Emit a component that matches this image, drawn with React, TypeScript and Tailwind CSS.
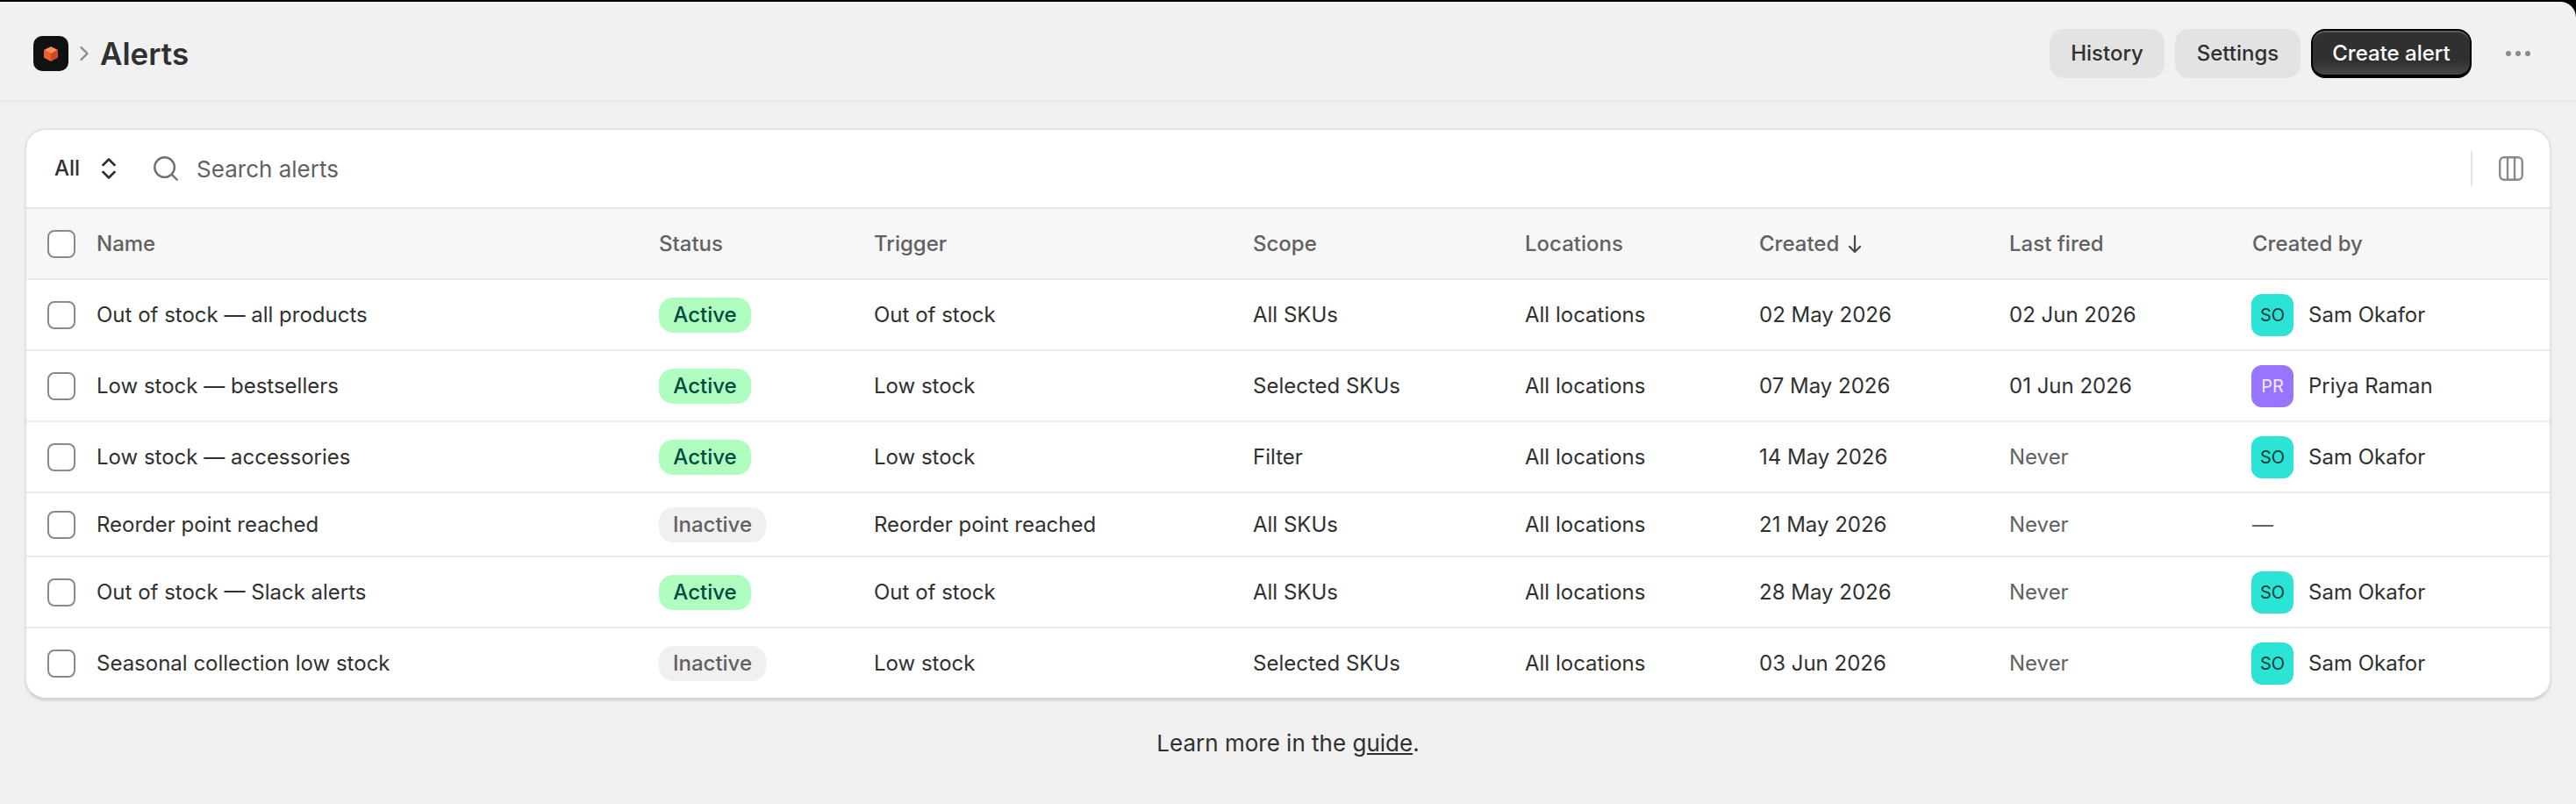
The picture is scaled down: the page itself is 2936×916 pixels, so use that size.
import { ChevronRight, Search } from "lucide-react";

type Row = {
  name: string;
  active: boolean;
  trigger: string;
  scope: string;
  created: string;
  fired: string;
  by: "SO" | "PR" | null;
};

const rows: Row[] = [
  { name: "Out of stock — all products", active: true, trigger: "Out of stock", scope: "All SKUs", created: "02 May 2026", fired: "02 Jun 2026", by: "SO" },
  { name: "Low stock — bestsellers", active: true, trigger: "Low stock", scope: "Selected SKUs", created: "07 May 2026", fired: "01 Jun 2026", by: "PR" },
  { name: "Low stock — accessories", active: true, trigger: "Low stock", scope: "Filter", created: "14 May 2026", fired: "Never", by: "SO" },
  { name: "Reorder point reached", active: false, trigger: "Reorder point reached", scope: "All SKUs", created: "21 May 2026", fired: "Never", by: null },
  { name: "Out of stock — Slack alerts", active: true, trigger: "Out of stock", scope: "All SKUs", created: "28 May 2026", fired: "Never", by: "SO" },
  { name: "Seasonal collection low stock", active: false, trigger: "Low stock", scope: "Selected SKUs", created: "03 Jun 2026", fired: "Never", by: "SO" },
];

function Checkbox() {
  return <div className="ml-[24px] h-[32px] w-[32px] rounded-[8px] border-2 border-[#8a8a8a] bg-white" />;
}

function Logo() {
  return (
    <div className="flex h-[40px] w-[40px] items-center justify-center rounded-[10px] bg-[#0f1113]">
      <svg width="16" height="17" viewBox="0 0 16 17">
        <path d="M8 0l8 4-8 4.5-8-4.5z" fill="#ff8a5c" />
        <path d="M0 4l8 4.5V17l-8-4.2z" fill="#e8602e" />
        <path d="M16 4L8 8.5V17l8-4.2z" fill="#cc4c1e" />
      </svg>
    </div>
  );
}

function UpDown() {
  return (
    <svg width="16" height="24" viewBox="0 0 16 24" fill="none" stroke="#303030" strokeWidth="2.6" strokeLinecap="round" strokeLinejoin="round">
      <path d="M1.5 8L8 1.5 14.5 8M1.5 16L8 22.5 14.5 16" />
    </svg>
  );
}

function ColumnsIcon() {
  return (
    <svg width="28" height="28" viewBox="0 0 28 28" fill="none" stroke="#8a8a8a" strokeWidth="2.4">
      <rect x="1.2" y="1.2" width="25.6" height="25.6" rx="5" />
      <path d="M10 1.2v25.6M18 1.2v25.6" />
    </svg>
  );
}

function SortArrow() {
  return (
    <svg className="ml-[11px]" width="14" height="20" viewBox="0 0 14 20" fill="none" stroke="#4a4a4a" strokeWidth="2.2" strokeLinecap="round" strokeLinejoin="round">
      <path d="M7 1v18M1 13l6 6 6-6" />
    </svg>
  );
}

function Avatar({ initials }: { initials: "SO" | "PR" }) {
  return (
    <div
      className={
        initials === "SO"
          ? "flex h-[48px] w-[48px] items-center justify-center rounded-[12px] bg-[#2ce4d6] text-[20px] text-[#0b3b38]"
          : "flex h-[48px] w-[48px] items-center justify-center rounded-[12px] bg-[#9775ff] text-[20px] text-[#f1e9ff]"
      }
    >
      {initials}
    </div>
  );
}

function Head({ children }: { children: React.ReactNode }) {
  return <th className="p-0 text-left font-medium">{children}</th>;
}

export default function App() {
  return (
    <div className="h-[916px] overflow-hidden bg-black pt-[2px] font-['Inter',sans-serif] text-[24px] text-[#303030]">
      <div className="h-[914px] rounded-tr-[18px] bg-[#f1f1f1]">
        <header className="flex h-[114px] items-center justify-between border-b-2 border-[#ebebeb] pl-[38px] pr-[52px] pt-[6px]">
          <div className="flex items-center">
            <Logo />
            <ChevronRight className="ml-[4px] h-[28px] w-[28px] text-[#8a8a8a]" strokeWidth={2} />
            <h1 className="ml-[4px] text-[35px] font-semibold leading-[48px]">Alerts</h1>
          </div>
          <div className="flex items-center">
            <button className="h-[56px] w-[131px] rounded-[16px] bg-[#e3e3e3] font-medium">History</button>
            <button className="ml-[12px] h-[56px] w-[143px] rounded-[16px] bg-[#e3e3e3] font-medium">Settings</button>
            <button className="ml-[12px] h-[56px] w-[183px] rounded-[16px] border-2 border-b-[4px] border-black bg-[linear-gradient(#303030_70%,#484848)] pt-[2px] font-medium text-white shadow-[inset_0_2px_0_#5c5c5c]">
              Create alert
            </button>
            <div className="ml-[39px] flex gap-[5px]">
              <span className="h-[6px] w-[6px] rounded-full bg-[#8a8a8a]" />
              <span className="h-[6px] w-[6px] rounded-full bg-[#8a8a8a]" />
              <span className="h-[6px] w-[6px] rounded-full bg-[#8a8a8a]" />
            </div>
          </div>
        </header>

        <div className="mx-[28px] mt-[30px] overflow-hidden rounded-[24px] border-2 border-[#e3e3e3] border-b-[#d4d4d4] bg-white shadow-[0_2px_2px_rgba(0,0,0,0.1)]">
          <div className="flex h-[90px] items-center border-b-2 border-[#e3e3e3] pl-[32px] pr-[30px]">
            <span className="font-medium">All</span>
            <div className="ml-[25px]"><UpDown /></div>
            <Search className="ml-[40px] h-[34px] w-[34px] text-[#6f6f6f]" strokeWidth={1.7} />
            <span className="ml-[18px] flex-1 text-[26px] text-[#616161]">Search alerts</span>
            <div className="h-[40px] w-[2px] bg-[#e3e3e3]" />
            <div className="ml-[30px]"><ColumnsIcon /></div>
          </div>
          <table className="w-full table-fixed border-collapse">
            <colgroup>
              <col className="w-[80px]" />
              <col className="w-[641px]" />
              <col className="w-[245px]" />
              <col className="w-[432px]" />
              <col className="w-[310px]" />
              <col className="w-[267px]" />
              <col className="w-[285px]" />
              <col className="w-[277px]" />
              <col />
            </colgroup>
            <thead>
              <tr className="h-[80px] border-b-2 border-[#ebebeb] bg-[#f7f7f7] text-[#616161]">
                <th className="p-0"><Checkbox /></th>
                <Head>Name</Head>
                <Head>Status</Head>
                <Head>Trigger</Head>
                <Head>Scope</Head>
                <Head>Locations</Head>
                <Head>
                  <span className="flex items-center">
                    Created
                    <SortArrow />
                  </span>
                </Head>
                <Head>Last fired</Head>
                <Head>Created by</Head>
              </tr>
            </thead>
            <tbody>
              {rows.map((row) => (
                <tr key={row.name} className="border-b-2 border-[#ebebeb] last:border-b-0">
                  <td className="py-[15.5px]"><Checkbox /></td>
                  <td className="py-[15.5px]">{row.name}</td>
                  <td className="py-[15.5px]">
                    {row.active ? (
                      <span className="flex h-[40px] w-[105px] items-center justify-center rounded-[16px] bg-[#affebf] font-medium text-[#014b40]">
                        Active
                      </span>
                    ) : (
                      <span className="flex h-[40px] w-[122px] items-center justify-center rounded-[16px] bg-[#f0f0f0] font-medium text-[#616161]">
                        Inactive
                      </span>
                    )}
                  </td>
                  <td className="py-[15.5px]">{row.trigger}</td>
                  <td className="py-[15.5px]">{row.scope}</td>
                  <td className="py-[15.5px]">All locations</td>
                  <td className="py-[15.5px]">{row.created}</td>
                  <td className={row.fired === "Never" ? "py-[15.5px] text-[#616161]" : "py-[15.5px]"}>{row.fired}</td>
                  <td className="py-[15.5px]">
                    {row.by ? (
                      <div className="-ml-[1px] flex items-center gap-[17px]">
                        <Avatar initials={row.by} />
                        {row.by === "SO" ? "Sam Okafor" : "Priya Raman"}
                      </div>
                    ) : (
                      <span className="text-[#616161]">—</span>
                    )}
                  </td>
                </tr>
              ))}
            </tbody>
          </table>
        </div>

        <p className="mt-[32px] text-center text-[26px] leading-[36px]">
          Learn more in the <span className="underline">guide</span>.
        </p>
      </div>
    </div>
  );
}
